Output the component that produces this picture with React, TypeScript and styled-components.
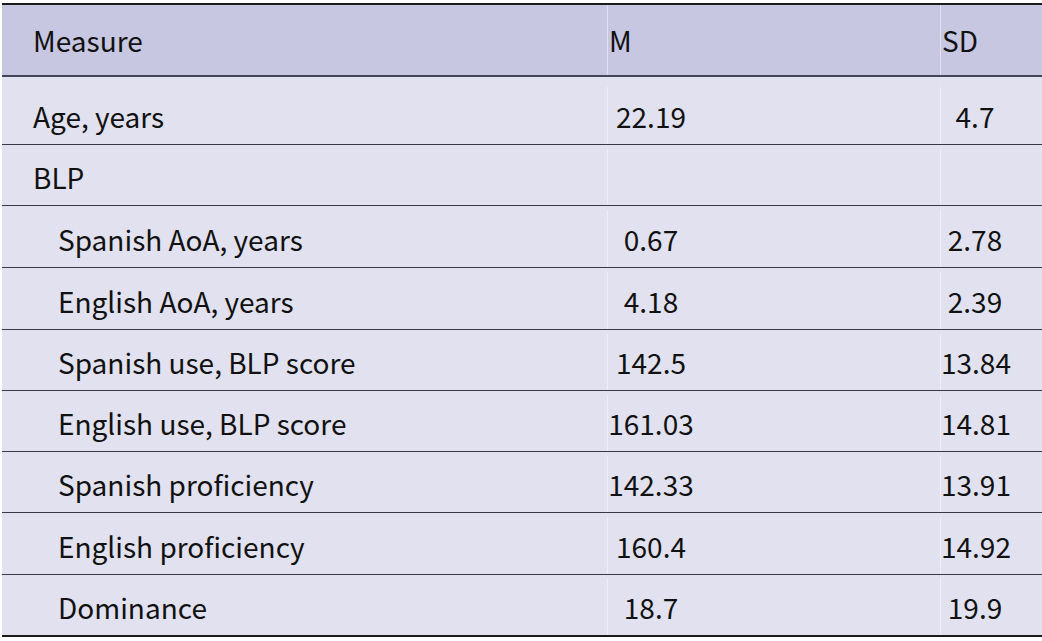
import React from "react";
import styled, { createGlobalStyle } from "styled-components";

const GlobalStyle = createGlobalStyle`
  html, body { margin: 0; padding: 0; background: #ffffff; }
  body { font-family: "Noto Sans CJK JP", "Noto Sans", sans-serif; color: #111111; }
`;

const Table = styled.div`
  margin: 3px 0 0 2px;
  width: 1040px;
  border-top: 2px solid #1a1a1a;
  border-bottom: 2px solid #1a1a1a;
  display: flex;
  flex-direction: column;
  font-size: 28px;
  line-height: 1;
`;

const Row = styled.div<{ $h: number; $pt: number; $head?: boolean; $last?: boolean }>`
  box-sizing: border-box;
  height: ${(p) => p.$h}px;
  padding-top: ${(p) => p.$pt}px;
  display: grid;
  grid-template-columns: 605px 333px 1fr;
  background: ${(p) => (p.$head ? "#c7c7e2" : "#e1e1ef")};
  border-bottom: ${(p) => (p.$last ? "none" : p.$head ? "2px solid #45455a" : "1.5px solid #3a3a44")};
`;

const Cell = styled.div<{ $sep?: boolean }>`
  display: flex;
  align-items: center;
  border-left: ${(p) => (p.$sep ? "1px solid rgba(255,255,255,0.45)" : "none")};
`;

const Label = styled(Cell)<{ $indent?: boolean }>`
  padding-left: ${(p) => (p.$indent ? 56 : 31)}px;
`;

const HeadText = styled.span`
  padding-left: 1px;
`;

const Value = styled.span<{ $w: number }>`
  display: inline-block;
  width: ${(p) => p.$w}px;
  text-align: center;
`;

type R = { label: string; m?: string; sd?: string; indent?: boolean; h: number; pt: number };

const rows: R[] = [
  { label: "Age, years", m: "22.19", sd: "4.7", h: 68, pt: 10 },
  { label: "BLP", h: 61, pt: 4 },
  { label: "Spanish AoA, years", m: "0.67", sd: "2.78", indent: true, h: 62, pt: 4 },
  { label: "English AoA, years", m: "4.18", sd: "2.39", indent: true, h: 62, pt: 4 },
  { label: "Spanish use, BLP score", m: "142.5", sd: "13.84", indent: true, h: 61, pt: 4 },
  { label: "English use, BLP score", m: "161.03", sd: "14.81", indent: true, h: 61, pt: 4 },
  { label: "Spanish proficiency", m: "142.33", sd: "13.91", indent: true, h: 61, pt: 4 },
  { label: "English proficiency", m: "160.4", sd: "14.92", indent: true, h: 62, pt: 4 },
  { label: "Dominance", m: "18.7", sd: "19.9", indent: true, h: 60, pt: 3 },
];

export default function App() {
  return (
    <>
      <GlobalStyle />
      <Table>
        <Row $h={72} $pt={0} $head>
          <Label>Measure</Label>
          <Cell $sep>
            <HeadText>M</HeadText>
          </Cell>
          <Cell $sep>
            <HeadText>SD</HeadText>
          </Cell>
        </Row>
        {rows.map((r, i) => (
          <Row key={r.label} $h={r.h} $pt={r.pt} $last={i === rows.length - 1}>
            <Label $indent={r.indent}>{r.label}</Label>
            <Cell $sep>{r.m && <Value $w={86}>{r.m}</Value>}</Cell>
            <Cell $sep>{r.sd && <Value $w={68}>{r.sd}</Value>}</Cell>
          </Row>
        ))}
      </Table>
    </>
  );
}
